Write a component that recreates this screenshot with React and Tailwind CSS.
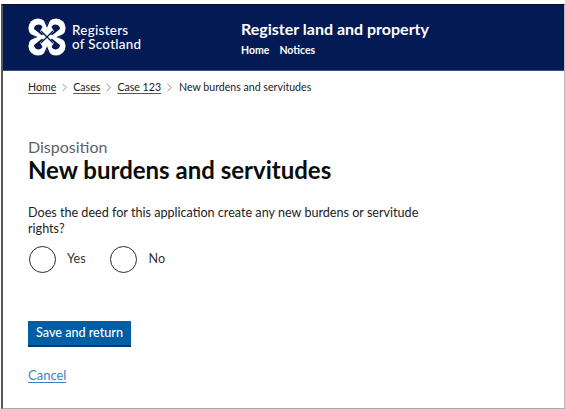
const crumbs = ["Home", "Cases", "Case 123"];

function Logo() {
  return (
    <svg viewBox="0 0 38 38" className="w-[38px] h-[38px] shrink-0" fill="none">
      <g fill="white">
        <circle cx="10" cy="10" r="9.6" />
        <circle cx="28" cy="10" r="9.6" />
        <circle cx="10" cy="28" r="9.6" />
        <circle cx="28" cy="28" r="9.6" />
        <rect x="9" y="9" width="20" height="20" />
      </g>
      <g fill="#031a54">
        <path d="M6 11A4.5 4.5 0 0 1 14.5 9L12 13.5L16 16.5L13.5 17Z" />
        <path d="M32 11A4.5 4.5 0 0 0 23.5 9L26 13.5L22 16.5L24.5 17Z" />
        <path d="M6 27A4.5 4.5 0 0 0 14.5 29L12 24.5L16 21.5L13.5 21Z" />
        <path d="M32 27A4.5 4.5 0 0 1 23.5 29L26 24.5L22 21.5L24.5 21Z" />
      </g>
      <g stroke="#031a54" strokeWidth="1.3">
        <path d="M13 13L25 25M25 13L13 25" />
        <path d="M16 1L19 8L22 1M16 37L19 30L22 37M1 16L8 19L1 22M37 16L30 19L37 22" />
      </g>
    </svg>
  );
}

function Chevron({ last }) {
  return (
    <svg viewBox="0 0 7 9" className={`w-[7px] h-[9px] ml-[5px] ${last ? "mr-[6px]" : "mr-[5px]"}`} fill="none" stroke="#8a8a8a" strokeWidth="0.9">
      <path d="M1.5 1L5.5 4.5L1.5 8" />
    </svg>
  );
}

function Radio({ label, gap }) {
  return (
    <label className="flex items-center">
      <span className="w-[27px] h-[27px] rounded-full border-[1.5px] border-[#2a2a2a] bg-white" />
      <span className={`${gap} text-[12.6px] text-[#333]`}>{label}</span>
    </label>
  );
}

export default function App() {
  return (
    <div className="h-[409px] w-[565px] bg-white pt-[4px] pl-[1px] overflow-hidden font-['Lato',sans-serif] text-[#0b0c0c]">
      <div className="h-[405px] border-t border-t-[#111] border-l-2 border-l-[#555] border-r border-r-[#bbb] border-b border-b-[#aaa]">
        <header className="h-[66px] bg-[#031a54] border-b border-[#3b4d7d] flex text-white pl-[25px]">
          <div className="flex items-center w-[213px] pb-[2px]">
            <Logo />
            <div className="ml-[6px] text-[13.4px] leading-[14px] font-medium tracking-[0.3px]">
              <div>Registers</div>
              <div>of Scotland</div>
            </div>
          </div>
          <div className="pt-[13px]">
            <div className="text-[16px] leading-[22px] font-bold">Register land and property</div>
            <nav className="mt-[3px] flex gap-[10px] text-[10.5px] leading-[14px] font-bold">
              <a>Home</a>
              <a>Notices</a>
            </nav>
          </div>
        </header>

        <main className="pl-[25px]">
          <nav className="mt-[9px] flex items-center text-[10.6px] leading-[14px] text-[#222]">
            {crumbs.map((c, i) => (
              <span key={c} className="flex items-center">
                <a className="underline underline-offset-2 decoration-[#555]">{c}</a>
                <Chevron last={i === crumbs.length - 1} />
              </span>
            ))}
            <span>New burdens and servitudes</span>
          </nav>

          <div className="mt-[43px] text-[16px] leading-[20px] text-[#5a6269]">Disposition</div>
          <h1 className="mt-[-2px] text-[24px] leading-[29px] font-bold text-[#0b0c0c]">New burdens and servitudes</h1>

          <p className="mt-[21px] w-[410px] text-[12.6px] leading-[16px] text-[#222]">
            Does the deed for this application create any new burdens or servitude rights?
          </p>

          <div className="mt-[9px] ml-[1px] flex gap-[24px]">
            <Radio label="Yes" gap="ml-[11px]" />
            <Radio label="No" gap="ml-[12px]" />
          </div>

          <button className="block mt-[48px] w-[103px] h-[26px] bg-[#005ea5] border-b-2 border-[#003a66] text-white text-[12.6px] font-medium">
            Save and return
          </button>

          <a className="inline-block mt-[20px] text-[13px] leading-[16px] text-[#3b82c4] underline underline-offset-2">
            Cancel
          </a>
        </main>
      </div>
    </div>
  );
}
